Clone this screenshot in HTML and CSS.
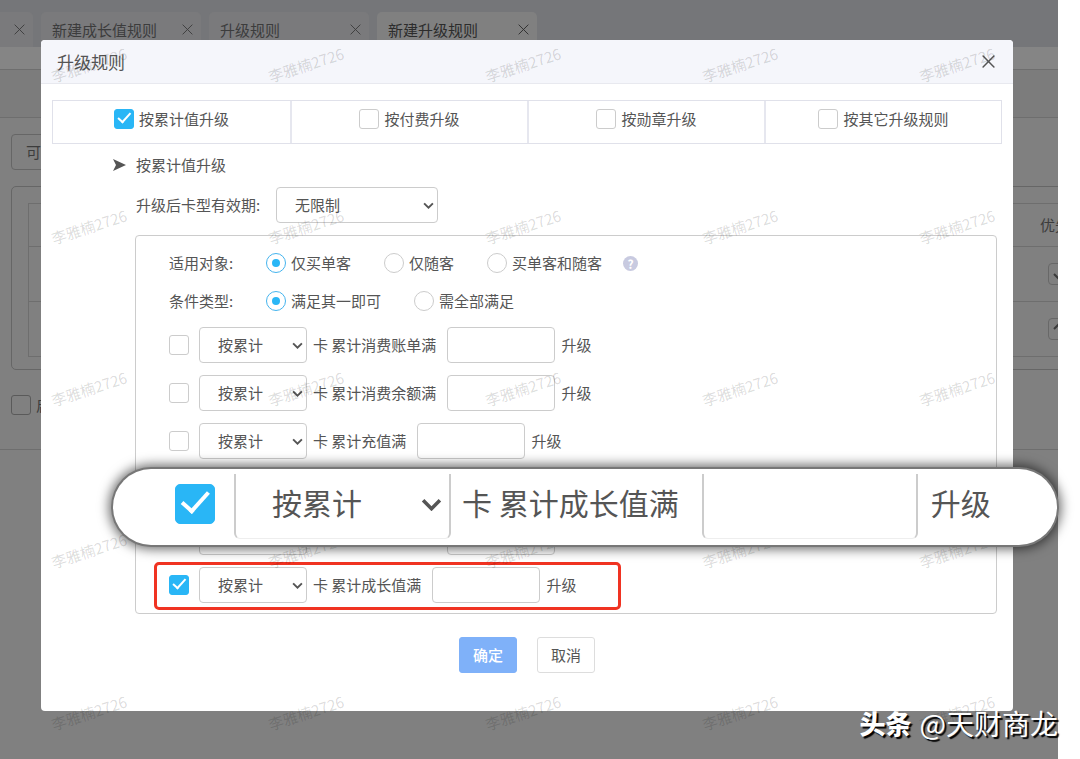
FILE: index.html
```html
<!DOCTYPE html>
<html lang="zh-CN">
<head>
<meta charset="utf-8">
<title>升级规则</title>
<link rel="stylesheet" href="styles.css">
</head>
<body>
<svg class="defs" aria-hidden="true">
  <symbol id="close" viewBox="0 0 12 12"><path d="M1 1l10 10M11 1L1 11" fill="none" stroke="currentColor" stroke-linecap="round"/></symbol>
  <symbol id="chevron" viewBox="0 0 10 6"><path d="M1 1l4 4 4-4" fill="none" stroke="currentColor" stroke-width="1.7"/></symbol>
</svg>
<div class="stage">
  <div class="page">
    <nav class="tabs">
      <div class="tab tab-cut"><button class="tab-close" aria-label="关闭"><svg><use href="#close"/></svg></button></div>
      <div class="tab"><span>新建成长值规则</span><button class="tab-close" aria-label="关闭"><svg><use href="#close"/></svg></button></div>
      <div class="tab"><span>升级规则</span><button class="tab-close" aria-label="关闭"><svg><use href="#close"/></svg></button></div>
      <div class="tab tab-active"><span>新建升级规则</span><button class="tab-close" aria-label="关闭"><svg><use href="#close"/></svg></button></div>
    </nav>
    <div class="strip"></div>
    <div class="toolbar"></div>
    <div class="content">
      <button class="filter">可</button>
      <div class="panel">
        <table class="levels">
          <thead><tr><th></th><th class="order">优先级</th></tr></thead>
          <tbody>
            <tr><td></td><td class="order"><button class="move" aria-label="下移"><svg viewBox="0 0 12 12"><path d="M6 1v9M1 6l5 5 5-5" fill="none" stroke="currentColor" stroke-width="2"/></svg></button></td></tr>
            <tr><td></td><td class="order"><button class="move" aria-label="上移"><svg viewBox="0 0 12 12"><path d="M6 11V2M1 6l5-5 5 5" fill="none" stroke="currentColor" stroke-width="2"/></svg></button></td></tr>
          </tbody>
        </table>
      </div>
      <label class="check enable"><input type="checkbox">启</label>
    </div>
  </div>

  <section class="modal" role="dialog" aria-labelledby="title">
    <header class="modal-head">
      <h1 id="title">升级规则</h1>
      <button class="modal-close" aria-label="关闭"><svg><use href="#close"/></svg></button>
    </header>
    <div class="kinds">
      <label class="check"><input type="checkbox" checked>按累计值升级</label>
      <label class="check"><input type="checkbox">按付费升级</label>
      <label class="check"><input type="checkbox">按勋章升级</label>
      <label class="check"><input type="checkbox">按其它升级规则</label>
    </div>
    <h2 class="section-title"><svg viewBox="0 0 13 12"><path d="M0 0l13 6-13 6 3-6z" fill="currentColor"/></svg>按累计值升级</h2>
    <div class="validity">
      <label for="validity">升级后卡型有效期:</label>
      <span class="select select-wide"><select id="validity"><option>无限制</option></select><svg><use href="#chevron"/></svg></span>
    </div>
    <div class="rules">
      <div class="options" role="radiogroup" aria-labelledby="target">
        <span class="options-name" id="target">适用对象:</span>
        <label class="check"><input type="radio" name="target" checked>仅买单客</label>
        <label class="check"><input type="radio" name="target">仅随客</label>
        <label class="check"><input type="radio" name="target">买单客和随客</label>
        <button class="help" aria-label="说明">?</button>
      </div>
      <div class="options" role="radiogroup" aria-labelledby="match">
        <span class="options-name" id="match">条件类型:</span>
        <label class="check"><input type="radio" name="match" checked>满足其一即可</label>
        <label class="check"><input type="radio" name="match">需全部满足</label>
      </div>
      <div class="conditions">
        <div class="condition">
          <input type="checkbox" aria-labelledby="c1">
          <span class="select"><select aria-labelledby="c1"><option>按累计</option></select><svg><use href="#chevron"/></svg></span>
          <label class="condition-name" id="c1" for="v1">卡 累计消费账单满</label><input class="field" id="v1" type="text"><span>升级</span>
        </div>
        <div class="condition">
          <input type="checkbox" aria-labelledby="c2">
          <span class="select"><select aria-labelledby="c2"><option>按累计</option></select><svg><use href="#chevron"/></svg></span>
          <label class="condition-name" id="c2" for="v2">卡 累计消费余额满</label><input class="field" id="v2" type="text"><span>升级</span>
        </div>
        <div class="condition">
          <input type="checkbox" aria-labelledby="c3">
          <span class="select"><select aria-labelledby="c3"><option>按累计</option></select><svg><use href="#chevron"/></svg></span>
          <label class="condition-name" id="c3" for="v3">卡 累计充值满</label><input class="field" id="v3" type="text"><span>升级</span>
        </div>
        <div class="condition"></div>
        <div class="condition condition-covered">
          <span class="select"><select></select></span>
          <input class="field" type="text">
        </div>
        <div class="condition condition-marked">
          <input type="checkbox" aria-labelledby="c6" checked>
          <span class="select"><select aria-labelledby="c6"><option>按累计</option></select><svg><use href="#chevron"/></svg></span>
          <label class="condition-name" id="c6" for="v6">卡 累计成长值满</label><input class="field" id="v6" type="text"><span>升级</span>
        </div>
      </div>
    </div>
    <footer class="actions">
      <button class="button button-primary">确定</button>
      <button class="button">取消</button>
    </footer>
  </section>

  <div class="watermarks" aria-hidden="true">
    <span>李雅楠2726</span><span>李雅楠2726</span><span>李雅楠2726</span><span>李雅楠2726</span><span>李雅楠2726</span>
    <span>李雅楠2726</span><span>李雅楠2726</span><span>李雅楠2726</span><span>李雅楠2726</span><span>李雅楠2726</span>
    <span>李雅楠2726</span><span>李雅楠2726</span><span>李雅楠2726</span><span>李雅楠2726</span><span>李雅楠2726</span>
    <span>李雅楠2726</span><span>李雅楠2726</span><span>李雅楠2726</span><span>李雅楠2726</span><span>李雅楠2726</span>
    <span>李雅楠2726</span><span>李雅楠2726</span><span>李雅楠2726</span><span>李雅楠2726</span><span>李雅楠2726</span>
  </div>

  <div class="lens">
    <input type="checkbox" aria-labelledby="lens-name" checked>
    <span class="select"><select aria-labelledby="lens-name"><option>按累计</option></select><svg><use href="#chevron"/></svg></span>
    <label class="lens-name" id="lens-name" for="lens-value">卡 累计成长值满</label>
    <input class="field" id="lens-value" type="text">
    <span>升级</span>
  </div>

  <div class="credit"><strong>头条</strong><span>@天财商龙</span></div>
</div>
</body>
</html>
```
FILE: styles.css
```css
* { box-sizing: border-box; }

body {
  margin: 0;
  background: #fff;
  color: #555;
  font: 15px/20px "Noto Sans CJK SC", "Noto Sans", sans-serif;
}

button, input, select { font: inherit; color: inherit; margin: 0; }
button { padding: 0; border: 0; background: none; }
.defs { display: none; }

.stage {
  position: relative;
  display: grid;
  min-height: 100vh;
  margin-right: 22px;
  background: #808080;
}

/* Dimmed page behind the dialog */
.page {
  grid-area: 1 / 1;
  min-width: 0;
  overflow: hidden;
  color: #3c3c3c;
}

.tabs {
  display: flex;
  gap: 8px;
  height: 47px;
  padding-top: 12px;
  background: #757679;
}

.tab {
  display: flex;
  align-items: center;
  justify-content: space-between;
  width: 160px;
  padding: 0 8px 0 11px;
  border-radius: 5px 5px 0 0;
  background: #7a7a7c;
}
.tab-cut { width: 33px; padding: 0 8px 0 14px; border-radius: 0 5px 0 0; }
.tab-active { background: #808080; color: #2c2c2c; }
.tab-close { display: flex; }
.tab-close svg { width: 11px; height: 11px; }

.strip { height: 22px; background: #858585; }
.toolbar {
  height: 49px;
  border: solid #6e6e6e;
  border-width: 1px 0;
  background: #7c7c7c;
}

.content {
  padding: 16px 0 34px 11px;
  border-bottom: 1px solid #6e6e6e;
}

.filter {
  display: block;
  width: 160px;
  height: 36px;
  padding-left: 14px;
  border: 1px solid #666;
  border-radius: 4px;
  text-align: left;
}

.panel {
  width: 1100px;
  height: 184px;
  margin-top: 16px;
  padding: 16px;
  border: 1px solid #666;
  border-radius: 5px;
}

.levels {
  width: 1060px;
  border-collapse: collapse;
  table-layout: fixed;
}
.levels th, .levels td {
  height: 55px;
  padding: 0;
  border: solid #6e6e6e;
  border-width: 1px 0;
  font-weight: normal;
  text-align: left;
}
.levels th { height: 43px; }
.levels tr > :first-child { border-left-width: 1px; }
.levels .order { width: 48px; }
.levels td.order { padding-left: 8px; }

.move {
  display: flex;
  align-items: center;
  justify-content: center;
  width: 22px;
  height: 22px;
  border: 1px solid #686868;
  border-radius: 4px;
}
.move svg { width: 12px; height: 12px; }
.enable { margin-top: 25px; }

/* Shared controls */
.check { display: flex; align-items: center; gap: 5px; }

input[type="checkbox"], input[type="radio"] {
  appearance: none;
  display: grid;
  place-items: center;
  flex: none;
  width: 20px;
  height: 20px;
  border: 1px solid #ccc;
  border-radius: 3px;
  background: #fff;
}
.enable input[type="checkbox"] { border-color: #5a5a5a; background: none; }

input[type="checkbox"]:checked { border-color: #29b6f6; background: #29b6f6; }
input[type="checkbox"]:checked::before {
  content: "";
  width: 60%;
  height: 30%;
  border: solid #fff;
  border-width: 0 0 2px 2px;
  transform: translateY(-30%) rotate(-48deg);
}

input[type="radio"] { border-radius: 50%; }
input[type="radio"]:checked { border-color: #45b4ee; }
input[type="radio"]:checked::before {
  content: "";
  width: 8px;
  height: 8px;
  border-radius: 50%;
  background: #29b6f6;
}

.select { position: relative; display: block; width: 108px; height: 36px; }
.select select {
  appearance: none;
  width: 100%;
  height: 100%;
  padding: 0 24px 0 18px;
  border: 1px solid #ccc;
  border-radius: 4px;
  background: #fff;
}
.select svg {
  position: absolute;
  top: 15px;
  right: 4px;
  width: 11px;
  height: 7px;
  pointer-events: none;
}
.select-wide { width: 162px; }

.field {
  width: 108px;
  height: 36px;
  padding: 0 8px;
  border: 1px solid #ccc;
  border-radius: 4px;
  background: #fff;
}

/* Dialog */
.modal {
  grid-area: 1 / 1;
  align-self: start;
  z-index: 1;
  margin: 40px 45px 0 41px;
  padding-bottom: 38px;
  border-radius: 4px;
  background: #fff;
}

.modal-head {
  display: flex;
  align-items: center;
  justify-content: space-between;
  height: 44px;
  padding: 0 18px 0 16px;
  border-bottom: 1px solid #e8e9ef;
  border-radius: 4px 4px 0 0;
  background: #f5f6fb;
}
.modal-head h1 { margin: 0; font-size: 17px; font-weight: normal; }
.modal-close { display: flex; }
.modal-close svg { width: 13px; height: 13px; stroke-width: 1.4; }

.kinds {
  display: grid;
  grid-template-columns: repeat(4, 1fr);
  margin: 16px 11px 0;
  border: 1px solid #e0e1ea;
}
.kinds .check { justify-content: center; padding: 8px 0 14px; }
.kinds .check + .check { border-left: 2px solid #e6e7ef; }

.section-title {
  display: flex;
  align-items: center;
  gap: 10px;
  margin: 11px 0 0 72px;
  font-size: 15px;
  font-weight: normal;
}
.section-title svg { width: 13px; height: 12px; }

.validity { display: flex; align-items: center; margin: 12px 0 0 95px; }
.validity label { width: 140px; }

.rules {
  margin: 12px 16px 0 94px;
  padding: 17px 33px 10px;
  border: 1px solid #ccc;
  border-radius: 4px;
}

.options { display: flex; align-items: center; gap: 33px; margin-bottom: 18px; }
.options-name { width: 64px; white-space: nowrap; }
.help {
  width: 15px;
  height: 15px;
  margin-left: -12px;
  border-radius: 50%;
  background: #c8cae0;
  color: #fff;
  font-size: 12px;
  font-weight: bold;
  line-height: 15px;
}

.conditions { display: grid; gap: 12px; justify-items: start; margin-top: -2px; }
.condition { display: flex; align-items: center; gap: 6px; min-height: 36px; }
.condition .select { margin-left: 4px; }
.condition-name { margin-right: 5px; }
.condition-covered { gap: 140px; padding-left: 26px; }

.condition-marked { position: relative; }
.condition-marked::after {
  content: "";
  position: absolute;
  inset: -5px -45px -7px -15px;
  border: 3px solid #f03322;
  border-radius: 5px;
  pointer-events: none;
}

.actions { display: flex; justify-content: center; gap: 20px; margin-top: 23px; }
.button {
  width: 58px;
  height: 36px;
  border: 1px solid #ddd;
  border-radius: 3px;
  background: #fff;
}
.button-primary { border-color: #7fb1f9; background: #7fb1f9; color: #fff; font-weight: 500; }

/* Repeated user watermark */
.watermarks {
  position: absolute;
  z-index: 2;
  inset: 0;
  display: grid;
  grid-template-columns: repeat(5, 217px);
  grid-auto-rows: 162px;
  justify-items: start;
  align-items: start;
  overflow: hidden;
  padding: 55px 0 0 50px;
  color: rgba(0, 0, 0, 0.15);
  pointer-events: none;
}
.watermarks span { transform: rotate(-18deg); }

/* Magnified strip */
.lens {
  position: absolute;
  z-index: 3;
  top: 469px;
  left: 113px;
  right: 1px;
  display: flex;
  align-items: center;
  height: 76px;
  padding: 0 0 6px 62px;
  border-radius: 38px;
  background: #fff;
  box-shadow: 0 0 0 2px #777, 0 0 12px 4px rgba(0, 0, 0, 0.6);
  font-size: 30px;
  line-height: 40px;
}
.lens input[type="checkbox"] { width: 40px; height: 40px; border-radius: 5px; }
.lens input[type="checkbox"]::before { border-width: 0 0 4px 4px; }
.lens .select { align-self: flex-end; width: 217px; height: 65px; margin: 0 11px 0 19px; }
.lens .select select {
  padding: 0 40px 8px 36px;
  border: solid #ccc;
  border-width: 0 2px 1px;
  border-bottom-color: #eee;
  border-radius: 0 0 6px 6px;
}
.lens .select svg { top: 24px; right: 9px; width: 21px; height: 13px; }
.lens-name, .lens > span:last-child { padding-bottom: 4px; }
.lens .field {
  align-self: flex-end;
  width: 216px;
  height: 65px;
  margin: 0 13px 0 23px;
  border: solid #ccc;
  border-width: 0 2px 1px;
  border-bottom-color: #eee;
  border-radius: 0 0 6px 6px;
}

.credit {
  position: absolute;
  z-index: 4;
  right: 0;
  bottom: 16px;
  display: flex;
  gap: 8px;
  color: #fff;
  font-size: 28px;
  line-height: 40px;
  text-shadow: 2px 2px 1px #000;
}
.credit strong { font-size: 26px; font-weight: 900; }
```
